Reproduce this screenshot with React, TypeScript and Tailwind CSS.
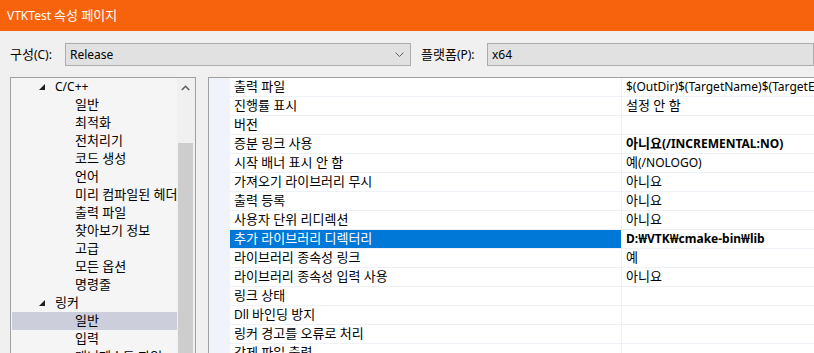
import React from "react";

const font = { fontFamily: '"Noto Sans", "Noto Sans CJK KR", sans-serif' };

function K({ text }: { text: string }) {
  const parts = text.split(/([\uAC00-\uD7A3]+(?:\s+[\uAC00-\uD7A3]+)*)/);
  return (
    <span className="whitespace-pre">
      {parts.map((p, i) =>
        /[\uAC00-\uD7A3]/.test(p) ? (
          <span key={i} className="text-[13px] leading-none">
            {p}
          </span>
        ) : (
          <span key={i}>{p}</span>
        )
      )}
    </span>
  );
}

type TreeItem = { label: string; level: 0 | 1; expanded?: boolean; selected?: boolean };

const tree: TreeItem[] = [
  { label: "C/C++", level: 0, expanded: true },
  { label: "일반", level: 1 },
  { label: "최적화", level: 1 },
  { label: "전처리기", level: 1 },
  { label: "코드 생성", level: 1 },
  { label: "언어", level: 1 },
  { label: "미리 컴파일된 헤더", level: 1 },
  { label: "출력 파일", level: 1 },
  { label: "찾아보기 정보", level: 1 },
  { label: "고급", level: 1 },
  { label: "모든 옵션", level: 1 },
  { label: "명령줄", level: 1 },
  { label: "링커", level: 0, expanded: true },
  { label: "일반", level: 1, selected: true },
  { label: "입력", level: 1 },
  { label: "매니페스트 파일", level: 1 },
];

type Row = { name: string; value: string; bold?: boolean; selected?: boolean };

const rows: Row[] = [
  { name: "출력 파일", value: "$(OutDir)$(TargetName)$(TargetExt)" },
  { name: "진행률 표시", value: "설정 안 함" },
  { name: "버전", value: "" },
  { name: "증분 링크 사용", value: "아니요(/INCREMENTAL:NO)", bold: true },
  { name: "시작 배너 표시 안 함", value: "예(/NOLOGO)" },
  { name: "가져오기 라이브러리 무시", value: "아니요" },
  { name: "출력 등록", value: "아니요" },
  { name: "사용자 단위 리디렉션", value: "아니요" },
  { name: "추가 라이브러리 디렉터리", value: "D:₩VTK₩cmake-bin₩lib", bold: true, selected: true },
  { name: "라이브러리 종속성 링크", value: "예" },
  { name: "라이브러리 종속성 입력 사용", value: "아니요" },
  { name: "링크 상태", value: "" },
  { name: "Dll 바인딩 방지", value: "" },
  { name: "링커 경고를 오류로 처리", value: "" },
  { name: "강제 파일 출력", value: "" },
];

function ChevronDown() {
  return (
    <svg width="9" height="5" viewBox="0 0 9 5" className="shrink-0">
      <polyline points="0.5,0.5 4.5,4.5 8.5,0.5" fill="none" stroke="#606060" strokeWidth="1" />
    </svg>
  );
}

function ChevronUp() {
  return (
    <svg width="9" height="6" viewBox="0 0 9 6">
      <polyline points="0.8,5 4.5,1.3 8.2,5" fill="none" stroke="#606060" strokeWidth="1.6" />
    </svg>
  );
}

function Triangle() {
  return (
    <svg width="6" height="6" viewBox="0 0 6 6">
      <polygon points="6,0 6,6 0,6" fill="#1E1E1E" />
    </svg>
  );
}

export default function App() {
  return (
    <div className="w-[814px] h-[353px] overflow-hidden bg-[#F0F0F0] text-[12px] text-black" style={font}>
      <div className="h-[31px] bg-[#F7630C] flex items-center pl-[7px] text-white text-[12px]">
        <K text="VTKTest 속성 페이지" />
      </div>

      <div className="flex items-center h-[23px] mt-[12px] pl-[10px]">
        <span className="w-[55px] shrink-0">
          <K text="구성(C):" />
        </span>
        <div className="w-[346px] h-[23px] border border-[#ADADAD] bg-[#E1E1E1] flex items-center justify-between pl-[4px] pr-[6px]">
          <span>Release</span>
          <ChevronDown />
        </div>
        <span className="ml-[10px] w-[66px] shrink-0">
          <K text="플랫폼(P):" />
        </span>
        <div className="flex-1 h-[23px] border border-[#ADADAD] bg-[#E1E1E1] flex items-center pl-[4px]">
          <span>x64</span>
        </div>
      </div>

      <div className="flex mt-[11px] pl-[10px] h-[290px]">
        {/* Tree panel */}
        <div className="w-[186px] shrink-0 border border-[#A0A0A0] bg-[#F5F5F5] flex overflow-hidden">
          <div className="flex-1 flex flex-col pl-[1px]">
            {tree.map((t, i) => (
              <div
                key={i}
                className={`h-[18px] shrink-0 flex items-center whitespace-nowrap ${t.selected ? "bg-[#CCCEDB]" : ""}`}
              >
                {t.level === 0 ? (
                  <>
                    <span className="w-[43px] shrink-0 flex justify-end pr-[10px] pb-[1px]">
                      <Triangle />
                    </span>
                    <K text={t.label} />
                  </>
                ) : (
                  <span className="pl-[63px]">
                    <K text={t.label} />
                  </span>
                )}
              </div>
            ))}
          </div>
          <div className="w-[17px] shrink-0 bg-[#F0F0F0] flex flex-col">
            <div className="h-[17px] flex items-center justify-center pt-[2px]">
              <ChevronUp />
            </div>
            <div className="h-[48px]" />
            <div className="flex-1 mx-[1px] bg-[#CDCDCD]" />
          </div>
          <div className="w-[1px] shrink-0 bg-[#F0F0F0]" />
        </div>

        {/* Property grid */}
        <div className="ml-[12px] flex-1 border-l border-t border-[#A0A0A0] bg-white flex overflow-hidden">
          <div className="w-[21px] shrink-0 bg-[#F0F4FA]" />
          <div className="flex-1 flex flex-col">
            {rows.map((r, i) => (
              <div key={i} className="h-[19px] shrink-0 flex border-b border-[#EEF1F5]">
                <div
                  className={`w-[392px] shrink-0 flex items-center pl-[4px] whitespace-nowrap border-r border-[#EEF1F5] ${
                    r.selected ? "bg-[#0078D7] text-white" : ""
                  }`}
                >
                  <K text={r.name} />
                </div>
                <div
                  className={`flex-1 flex items-center pl-[4px] whitespace-nowrap overflow-hidden ${
                    r.bold ? "font-bold" : ""
                  }`}
                >
                  <K text={r.value} />
                </div>
              </div>
            ))}
          </div>
        </div>
      </div>
    </div>
  );
}
